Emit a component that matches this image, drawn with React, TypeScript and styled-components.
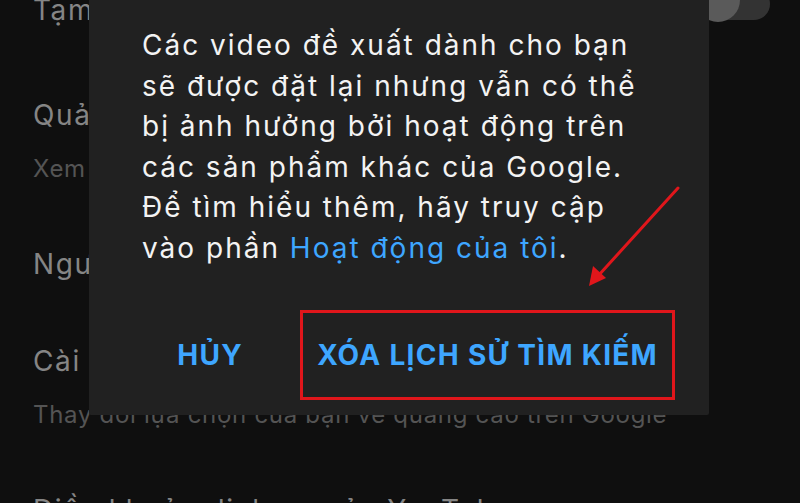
import React from 'react'
import styled, { createGlobalStyle } from 'styled-components'

const GlobalStyle = createGlobalStyle`
  html, body {
    margin: 0;
    padding: 0;
    background: #0f0f0f;
  }
  * {
    box-sizing: border-box;
  }
`

/* nền: màn hình cài đặt bị làm tối */
const Screen = styled.div`
  position: relative;
  width: 800px;
  height: 503px;
  overflow: hidden;
  background: #0f0f0f;
  font-family: Inter, Roboto, 'Noto Sans', Arial, sans-serif;
`

const SettingsList = styled.div`
  display: flex;
  flex-direction: column;
  gap: 63px;
  padding: 0 30px 0 33px;
  margin-top: -7px;
`

const Row = styled.div<{ $extra?: number }>`
  display: flex;
  align-items: flex-start;
  justify-content: space-between;
  margin-bottom: ${p => p.$extra ?? 0}px;
`

const RowText = styled.div`
  display: flex;
  flex-direction: column;
`

const Title = styled.div`
  font-size: 28px;
  line-height: 34px;
  letter-spacing: 1.6px;
  color: #858585;
  white-space: nowrap;
`

const Subtitle = styled.div`
  margin-top: 22px;
  font-size: 24px;
  line-height: 30px;
  letter-spacing: 0.7px;
  color: #545454;
  white-space: nowrap;
`

const Toggle = styled.div`
  position: relative;
  width: 60px;
  height: 32px;
  margin-top: -5px;
  border-radius: 16px;
  background: #333333;
`

const Knob = styled.div`
  position: absolute;
  left: -14px;
  top: -10px;
  width: 44px;
  height: 44px;
  border-radius: 50%;
  background: #5a5a5a;
`

/* hộp thoại */
const Dialog = styled.div`
  position: absolute;
  left: 89px;
  top: -20px;
  width: 620px;
  display: flex;
  flex-direction: column;
  padding: 45px 34px 15px 53px;
  background: #212121;
  border-radius: 2px;
`

const Message = styled.p`
  margin: 0;
  font-size: 28px;
  line-height: 40.6px;
  letter-spacing: 2px;
  color: #f3f3f3;
`

const Link = styled.span`
  color: #3ea6ff;
`

const Actions = styled.div`
  display: flex;
  justify-content: flex-end;
  gap: 40px;
  margin-top: 41px;
`

const ActionButton = styled.button<{ $marked?: boolean }>`
  height: 90px;
  padding: 0 14px;
  border: 3px solid ${p => (p.$marked ? '#e0161b' : 'transparent')};
  background: transparent;
  font-family: Inter, Roboto, 'Noto Sans', Arial, sans-serif;
  font-size: 28px;
  font-weight: 700;
  letter-spacing: 1.3px;
  color: #3ea6ff;
  cursor: pointer;
`

/* mũi tên chú thích */
const Arrow = styled.svg`
  position: absolute;
  left: 0;
  top: 0;
  pointer-events: none;
`

export default function App() {
  return (
    <>
      <GlobalStyle />
      <Screen>
        <SettingsList>
          <Row $extra={8}>
            <RowText>
              <Title>Tạm dừng lịch sử tìm kiếm</Title>
            </RowText>
            <Toggle>
              <Knob />
            </Toggle>
          </Row>
          <Row>
            <RowText>
              <Title>Quản lý toàn bộ hoạt động</Title>
              <Subtitle>Xem và xóa hoạt động của bạn</Subtitle>
            </RowText>
          </Row>
          <Row>
            <RowText>
              <Title>Người dùng và quyền riêng tư</Title>
            </RowText>
          </Row>
          <Row>
            <RowText>
              <Title>Cài đặt quảng cáo</Title>
              <Subtitle>Thay đổi lựa chọn của bạn về quảng cáo trên Google</Subtitle>
            </RowText>
          </Row>
          <Row>
            <RowText>
              <Title>Điều khoản dịch vụ của YouTube</Title>
            </RowText>
          </Row>
        </SettingsList>

        <Dialog>
          <Message>
            Các video đề xuất dành cho bạn
            <br />
            sẽ được đặt lại nhưng vẫn có thể
            <br />
            bị ảnh hưởng bởi hoạt động trên
            <br />
            các sản phẩm khác của Google.
            <br />
            Để tìm hiểu thêm, hãy truy cập
            <br />
            vào phần <Link>Hoạt động của tôi</Link>.
          </Message>
          <Actions>
            <ActionButton>HỦY</ActionButton>
            <ActionButton $marked>XÓA LỊCH SỬ TÌM KIẾM</ActionButton>
          </Actions>
        </Dialog>

        <Arrow width="800" height="503" viewBox="0 0 800 503">
          <line x1="678" y1="188" x2="598" y2="276" stroke="#e0161b" strokeWidth="3" strokeLinecap="round" />
          <polygon points="589,286 593,266 606,278" fill="#e0161b" />
        </Arrow>
      </Screen>
    </>
  )
}
